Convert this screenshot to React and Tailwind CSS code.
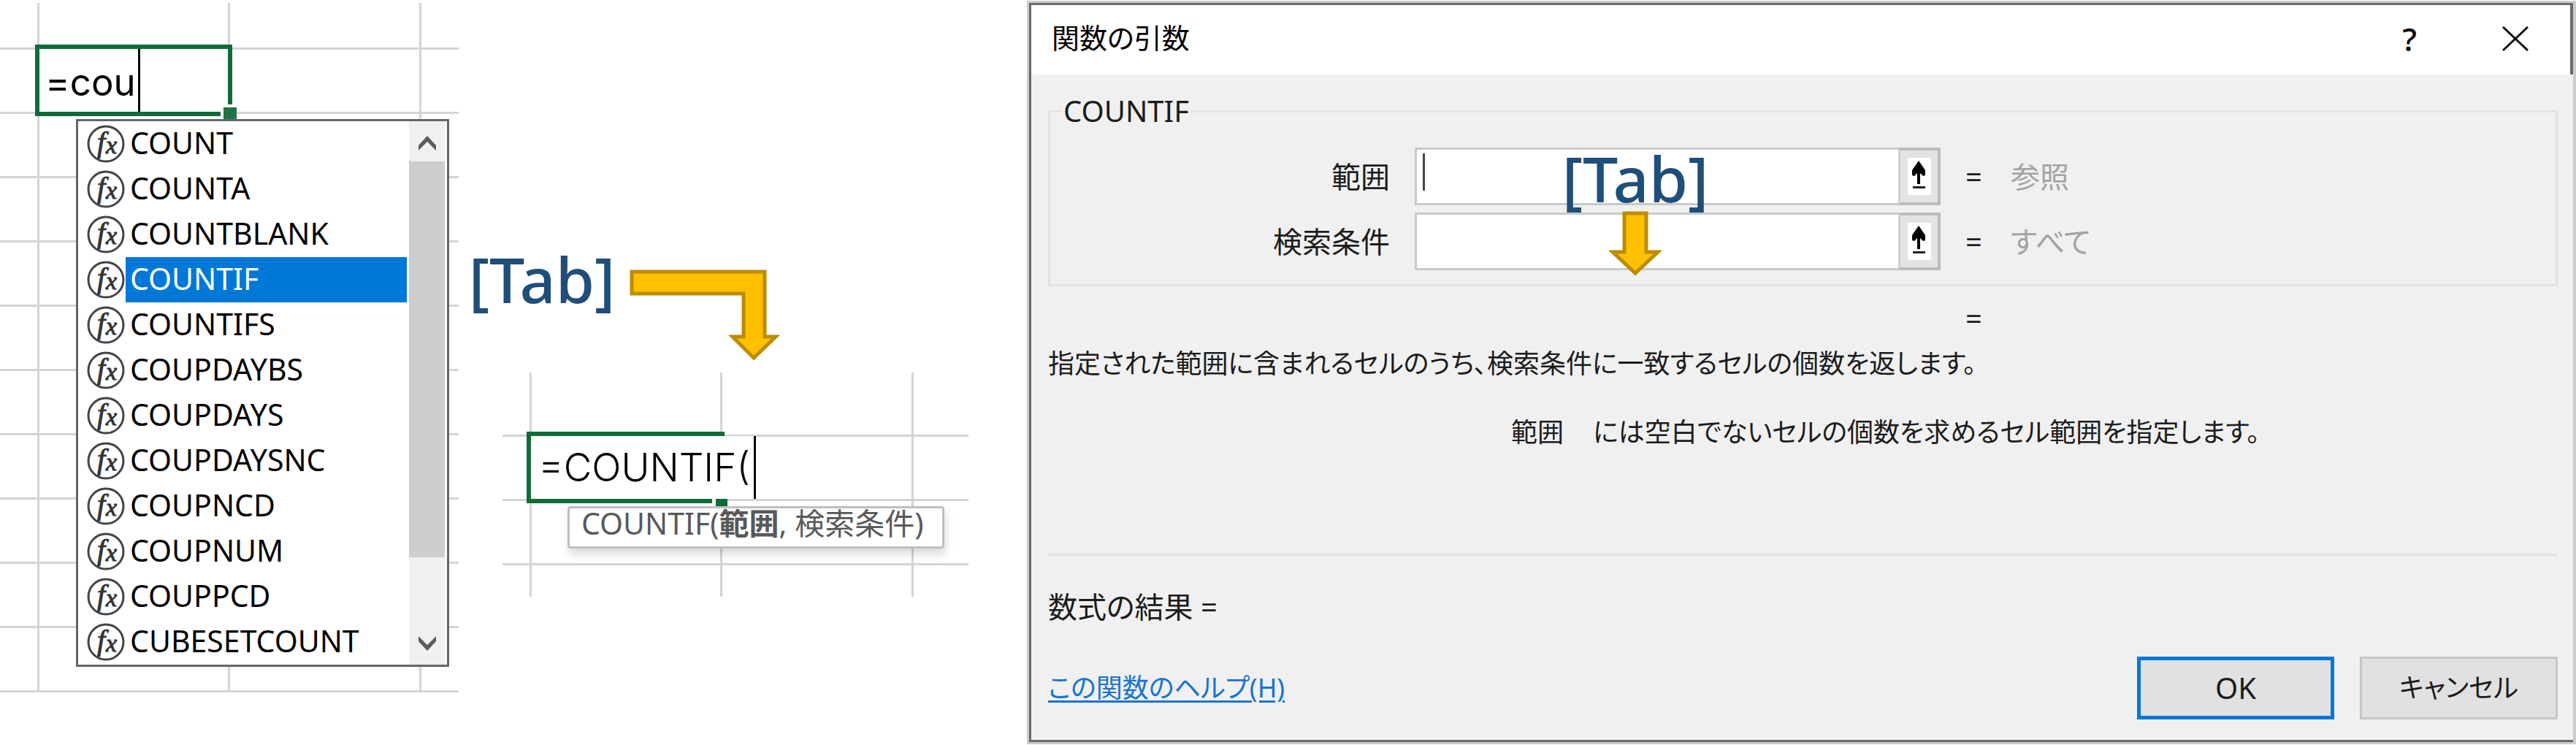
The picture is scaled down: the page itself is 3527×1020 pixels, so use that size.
import React, { useState } from 'react';

const FUNCTIONS = [
  'COUNT',
  'COUNTA',
  'COUNTBLANK',
  'COUNTIF',
  'COUNTIFS',
  'COUPDAYBS',
  'COUPDAYS',
  'COUPDAYSNC',
  'COUPNCD',
  'COUPNUM',
  'COUPPCD',
  'CUBESETCOUNT',
];

const ARGUMENTS = [
  { id: 'range', label: '範囲', hint: '参照', focused: true },
  { id: 'criteria', label: '検索条件', hint: 'すべて', focused: false },
];

const FxIcon = () => (
  <svg viewBox="0 0 52 52" className="h-[52px] w-[52px] shrink-0 overflow-visible" aria-hidden="true">
    <circle cx="26" cy="26" r="24" fill="#fff" stroke="#444" strokeWidth="3" />
    <text x="14" y="37" fontFamily="Liberation Serif, serif" fontStyle="italic" fontSize="40" fill="#333" stroke="#333">f</text>
    <text x="26" y="39" fontFamily="Liberation Serif, serif" fontStyle="italic" fontSize="34" fill="#333" stroke="#333">x</text>
  </svg>
);

const Chevron = ({ down = false }) => (
  <svg viewBox="0 0 24 20" className="h-5 w-6" aria-hidden="true">
    <path d={down ? 'M0 0 L12 12 L24 0 V7 L12 20 L0 7 Z' : 'M0 20 L12 8 L24 20 V13 L12 0 L0 13 Z'} fill="#5c5c5c" />
  </svg>
);

const PickerIcon = () => (
  <svg viewBox="0 0 32 51" className="h-[51px] w-8" aria-hidden="true">
    <rect width="32" height="51" fill="#fff" />
    <path d="M15 4 L24 17 V24 L21 25 L17 21 V36 H13 V21 L9 25 L6 24 V17 Z" fill="#000" />
    <rect x="7" y="39" width="17" height="3" fill="#222" />
  </svg>
);

// One row of gridlines, the last column stays open on the right
const SheetRow = ({ className, columns, children }) => (
  <div className={`grid border-[#d4d4d4] ${columns} ${className} ${children ? 'relative z-10' : ''}`}>
    <div className="border-r-3 border-[#d4d4d4]"></div>
    <div className="relative border-r-3 border-[#d4d4d4]">{children}</div>
    <div className="border-r-3 border-[#d4d4d4]"></div>
    <div></div>
  </div>
);

const FunctionList = ({ selected, onSelect }) => (
  <div className="absolute left-[50px] top-[95px] z-10 flex w-[511px] border-3 border-[#666] bg-white">
    <ul role="listbox" aria-label="関数" className="mr-[3px] flex-1">
      {FUNCTIONS.map((name) => (
        <li
          key={name}
          role="option"
          aria-selected={name === selected}
          onClick={() => onSelect(name)}
          className="flex h-[62px] items-center pl-3"
        >
          <FxIcon />
          <span
            className={`ml-px flex h-full flex-1 items-center pb-1 pl-[6px] text-[41px] leading-[58px] ${
              name === selected ? 'bg-[#0078d7] text-white' : 'text-black'
            }`}
          >
            {name}
          </span>
        </li>
      ))}
    </ul>
    <div className="mr-[3px] flex w-[49px] flex-col bg-[#f0f0f0]">
      <button type="button" aria-label="上へ" className="flex h-[55px] items-center justify-center pt-1">
        <Chevron />
      </button>
      <div className="h-[542px] bg-[#cdcdcd]"></div>
      <div className="flex-1"></div>
      <button type="button" aria-label="下へ" className="flex h-[58px] items-center justify-center">
        <Chevron down />
      </button>
    </div>
  </div>
);

const LeftSheet = () => {
  const [selected, setSelected] = useState('COUNTIF');
  const columns = 'grid-cols-[54px_261px_262px_1fr]';

  return (
    <section className="w-[628px] shrink-0 overflow-hidden pt-1">
      <SheetRow columns={columns} className="h-16 border-b-3" />
      <SheetRow columns={columns} className="h-[88px] border-b-3">
        <div className="absolute -left-[6px] -top-[7px] flex h-[98px] w-[270px] items-center border-6 border-[#0f6c37] bg-white pl-2">
          <input
            aria-label="セル"
            defaultValue="=cou"
            size={4}
            className="h-[86px] w-[127px] pt-1 font-[Inter,sans-serif] text-[51px] outline-none"
          />
          <span className="h-[86px] w-[3px] bg-black"></span>
        </div>
        {/* fill handle */}
        <div className="absolute left-[248px] top-[75px] h-[22px] w-[22px] border-l-4 border-t-4 border-white bg-[#217346]"></div>
        <FunctionList selected={selected} onSelect={setSelected} />
      </SheetRow>
      {[2, 3, 4, 5, 6, 7, 8, 9, 10].map((row) => (
        <SheetRow key={row} columns={columns} className="h-[88px] border-b-3" />
      ))}
    </section>
  );
};

const RightSheet = () => {
  const columns = 'grid-cols-[40px_261px_262px_1fr]';

  return (
    <div className="ml-[60px] w-[638px]">
      <SheetRow columns={columns} className="h-[88px] border-b-3" />
      <SheetRow columns={columns} className="h-[88px] border-b-3">
        <div className="absolute -left-[7px] -top-[7px] h-[98px] w-[271px] border-6 border-r-0 border-[#0f6c37]"></div>
        <div className="absolute -left-px -top-px flex h-[86px] w-[308px] items-center bg-white pl-[10px]">
          <input
            aria-label="数式"
            defaultValue="=COUNTIF("
            className="h-[86px] min-w-0 flex-1 font-[Inter,sans-serif] text-[53px] font-light outline-none"
          />
          <span className="h-[86px] w-[3px] bg-black"></span>
        </div>
        <div className="absolute left-[247px] top-[85px] h-[11px] w-[21px] border-l-5 border-white bg-[#0f6c37]"></div>
        <div
          role="tooltip"
          className="absolute left-[49px] top-[95px] z-10 flex h-[58px] w-[516px] items-center whitespace-nowrap rounded-sm border-3 border-[#bfbfbf] bg-white pb-3 pl-[16px] text-[41px] leading-10 text-[#595959] shadow-[2px_8px_12px_rgba(0,0,0,0.15)]"
        >
          <span>
            COUNTIF(<b>範囲</b>, 検索条件)
          </span>
        </div>
      </SheetRow>
      <SheetRow columns={columns} className="h-[88px] border-b-3" />
      <SheetRow columns={columns} className="h-[43px]" />
    </div>
  );
};

const TabKey = () => (
  <span className="w-[208px] whitespace-nowrap text-center text-[86px] font-medium leading-[96px] text-[#1f4e79]">
    [Tab]
  </span>
);

const ArgumentRow = ({ arg }) => (
  <div className="flex h-[79px] items-center">
    <label htmlFor={arg.id} className="w-[465px] shrink-0 text-right">
      {arg.label}
    </label>
    <div className="ml-[34px] flex h-full flex-1 border-3 border-[#c8c9cd] bg-white">
      <div className="flex min-w-0 flex-1 items-start pl-2 pt-[5px]">
        {arg.focused && <span className="h-[51px] w-[3px] shrink-0 bg-[#444]"></span>}
        <input id={arg.id} className="h-16 min-w-0 flex-1 bg-transparent outline-none" />
      </div>
      <button
        type="button"
        aria-label={`${arg.label}を選択`}
        className="-my-[3px] -mr-[3px] flex w-[58px] items-center justify-center border-4 border-l-3 border-[#b9bbbd] border-l-[#d0d0d0] bg-[#e3e3e3]"
      >
        <PickerIcon />
      </button>
    </div>
    <div className="flex w-[842px] shrink-0 pl-[34px]">
      <span className="w-[62px]">=</span>
      <span className="text-[#a3a3a3]">{arg.hint}</span>
    </div>
  </div>
);

const ArgumentsDialog = () => (
  <section
    role="dialog"
    aria-label="関数の引数"
    className="mt-px min-w-0 flex-1 border-3 border-r-4 border-[#cccccc] text-[40px] leading-[48px] text-[#1c1c1c]"
  >
    <div className="border-3 border-r-0 border-[#6a6a6a] bg-[#f0f0f0]">
      <header className="flex h-[95px] items-center justify-between border-r-4 border-[#6a6a6a] bg-white pl-7 pr-[57px] text-black">
        <h1 className="pb-2 text-[38px]">関数の引数</h1>
        <div className="flex items-center gap-[100px] pb-1">
          <button type="button" aria-label="ヘルプ" className="w-[54px] text-center text-[44px] font-medium">
            ?
          </button>
          <button type="button" aria-label="閉じる">
            <svg viewBox="0 0 36 34" className="h-[34px] w-9" aria-hidden="true">
              <path d="M1 1 L35 33 M35 1 L1 33" stroke="#111" strokeWidth="3" />
            </svg>
          </button>
        </div>
      </header>

      <div className="pb-7 pl-[23px] pr-[21px] pt-[26px]">
        <div className="relative">
          <fieldset className="border-3 border-[#e3e3e3] pb-[19px] pt-[26px]">
            <legend className="ml-4 px-[2px]">COUNTIF</legend>
            <div className="flex flex-col gap-[10px]">
              {ARGUMENTS.map((arg) => (
                <ArgumentRow key={arg.id} arg={arg} />
              ))}
            </div>
          </fieldset>
          {/* key hint lying over the two fields */}
          <div className="pointer-events-none absolute left-[694px] top-[68px] flex w-[220px] flex-col items-center">
            <TabKey />
            <svg viewBox="0 0 72 90" className="-mt-[3px] h-[90px] w-[72px]" aria-hidden="true">
              <path d="M21 3 H51 V56 H67 L36 85 L5 56 H21 Z" fill="#ffc000" stroke="#bc8c00" strokeWidth="5" />
            </svg>
          </div>
        </div>

        <div className="mr-[3px] mt-5 flex justify-end">
          <span className="w-[808px]">=</span>
        </div>
        <p className="mt-[14px] text-[36px]">指定された範囲に含まれるセルのうち、検索条件に一致するセルの個数を返します。</p>
        <p className="mt-[46px] flex gap-10 pl-[634px] text-[36px]">
          <span>範囲</span>
          <span>には空白でないセルの個数を求めるセル範囲を指定します。</span>
        </p>

        <hr className="mt-[142px] border-t-3 border-[#e2e2e2]" />
        <p className="mt-[46px]">数式の結果 =</p>

        <footer className="mt-11 flex items-center justify-between text-[36px]">
          <a href="#help" className="text-[#1874d2] underline decoration-3 underline-offset-4">
            この関数のヘルプ(H)
          </a>
          <div className="flex gap-[35px]">
            <button type="button" className="h-[86px] w-[270px] border-5 border-[#0078d7] bg-[#e1e1e1] text-[40px]">
              OK
            </button>
            <button type="button" className="h-[86px] w-[271px] border-3 border-[#c6c6c6] bg-[#e1e1e1]">
              キャンセル
            </button>
          </div>
        </footer>
      </div>
    </div>
  </section>
);

const App = () => {
  return (
    <main className="flex items-start overflow-hidden bg-white font-['Noto_Sans','Noto_Sans_CJK_JP',sans-serif] [font-feature-settings:'palt']">
      <LeftSheet />

      <section className="w-[778px] shrink-0 pt-[334px]">
        <div className="flex h-[176px] items-start pl-[10px]">
          <TabKey />
          <svg viewBox="0 0 206 126" className="ml-4 mt-[35px] h-[126px] w-[206px]" aria-hidden="true">
            <path d="M3 3 H185 V92 H200 L170 121 L141 92 H156 V33 H3 Z" fill="#ffc000" stroke="#bc8c00" strokeWidth="5" />
          </svg>
        </div>
        <RightSheet />
      </section>

      <ArgumentsDialog />
    </main>
  );
};

export default App;
